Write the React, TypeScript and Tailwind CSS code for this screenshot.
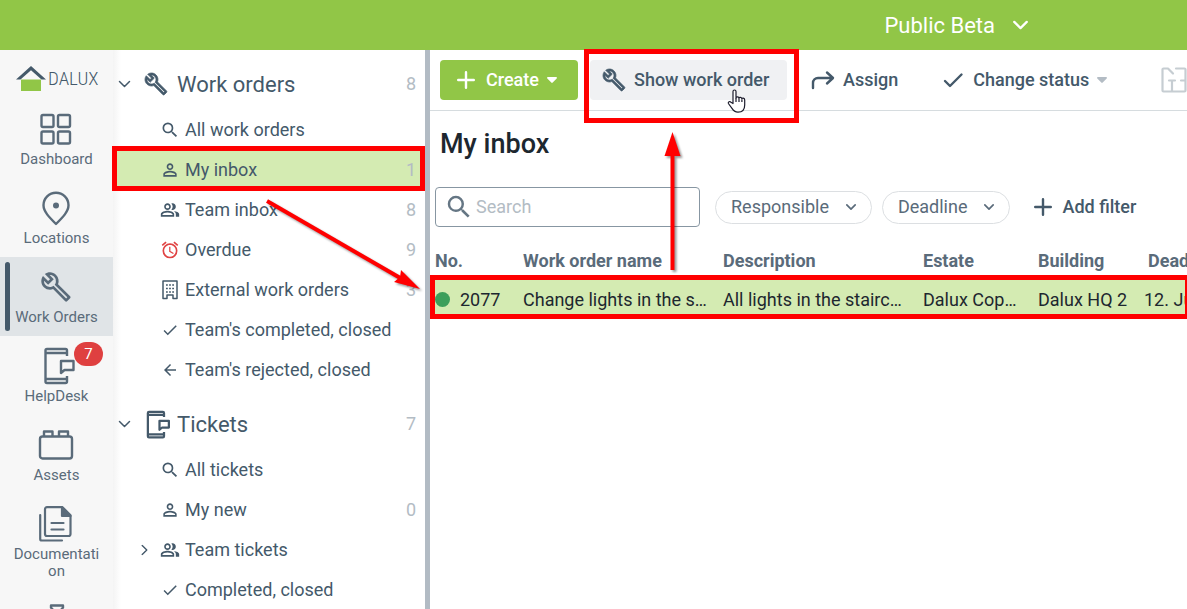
import type { ReactNode } from 'react'
import clsx from 'clsx'
import {
  MdArrowBack,
  MdCheck,
  MdOutlineAlarm,
  MdOutlineBuild,
  MdOutlinePeopleAlt,
  MdPersonOutline,
  MdSearch,
} from 'react-icons/md'

interface IconProps { className?: string }

function Chevron({ className }: IconProps) {
  return (
    <svg viewBox="0 0 12 8" className={className} fill="none" stroke="currentColor" strokeLinecap="round" strokeLinejoin="round">
      <path d="M1 1.5l5 5 5-5" />
    </svg>
  )
}

function Caret({ className }: IconProps) {
  return (
    <svg viewBox="0 0 10 6" className={className} fill="currentColor">
      <path d="M1 0h8c.9 0 1.3.9.7 1.5L5.7 5.6a1 1 0 0 1-1.4 0L.3 1.5C-.3.9.1 0 1 0z" />
    </svg>
  )
}

function Plus({ className }: IconProps) {
  return (
    <svg viewBox="0 0 18 18" className={className} fill="none" stroke="currentColor" strokeWidth="2.4" strokeLinecap="round">
      <path d="M9 1.2v15.600M1.2 9h15.600" />
    </svg>
  )
}

// Heavier cut of the wrench, for the small sizes
function BoldWrench() {
  return (
    <svg viewBox="0 0 24 24" className="size-6" fill="currentColor" stroke="currentColor" strokeWidth="0.7" strokeLinejoin="round">
      <path d="M22.610 19l-9.080-9.080c.93-2.340.45-5.100-1.440-7C9.790.61 6.210.4 3.660 2.260L7.500 6.110 6.080 7.520 2.250 3.690C.39 6.230.6 9.820 2.900 12.110c1.860 1.860 4.570 2.350 6.890 1.480l9.110 9.110c.39.39 1.020.39 1.410 0l2.300-2.300c.4-.38.4-1.010 0-1.400zm-3 1.590l-9.460-9.460c-.61.45-1.290.72-2 .82-1.360.2-2.790-.21-3.830-1.250C3.370 9.760 2.930 8.500 3 7.260l3.090 3.090 4.240-4.240-3.090-3.090c1.240-.07 2.490.37 3.440 1.310 1.080 1.080 1.490 2.570 1.240 3.960-.12.71-.42 1.370-.88 1.960l9.450 9.450-.88.89z" />
    </svg>
  )
}

function BoldCheck() {
  return (
    <svg viewBox="0 0 24 24" className="size-6" fill="none" stroke="currentColor" strokeWidth="2.4" strokeLinecap="round" strokeLinejoin="round">
      <path d="M4 13l5 5L20.500 6.500" />
    </svg>
  )
}

function DashboardIcon() {
  return (
    <svg viewBox="0 0 36 36" className="size-9" fill="none" stroke="currentColor" strokeWidth="2.4">
      <rect x="3.500" y="4" width="12" height="12" rx="1.5" />
      <rect x="20" y="4" width="12" height="12" rx="1.5" />
      <rect x="3.500" y="20.500" width="12" height="12" rx="1.5" />
      <rect x="20" y="20.500" width="12" height="12" rx="1.5" />
    </svg>
  )
}

function PinIcon() {
  return (
    <svg viewBox="0 0 36 36" className="size-9" fill="none" stroke="currentColor" strokeWidth="2.4" strokeLinejoin="round">
      <path d="M18 34C11 27 5.500 21.500 5.500 15.300a12.500 12.500 0 0 1 25 0C30.500 21.500 25 27 18 34z" />
      <circle cx="18" cy="15.500" r="3" fill="currentColor" stroke="none" />
    </svg>
  )
}

function HelpDeskIcon({ className }: IconProps) {
  return (
    <svg viewBox="0 0 32 38" className={className} fill="none" stroke="currentColor" strokeLinejoin="round">
      <path d="M24 9V3.500A1.500 1.500 0 0 0 22.500 2H4a1.500 1.500 0 0 0-1.500 1.500v31A1.500 1.500 0 0 0 4 36h18.500a1.500 1.500 0 0 0 1.500-1.500V29" />
      <path d="M2.500 6h21.500M2.500 32h21.500" />
      <path d="M18 26V14h12.500v9H21.500z" />
    </svg>
  )
}

function AssetsIcon() {
  return (
    <svg viewBox="0 0 36 36" className="size-9" fill="none" stroke="currentColor" strokeWidth="2.4" strokeLinejoin="round">
      <rect x="2" y="9.500" width="32" height="22" rx="2.500" />
      <path d="M6 9V4.500h8.500V9M21 9V4.500h9V9" />
    </svg>
  )
}

function DocumentsIcon() {
  return (
    <svg viewBox="0 0 36 36" className="size-9" fill="none" stroke="currentColor" strokeWidth="2.2" strokeLinejoin="round" strokeLinecap="round">
      <path d="M24.500 1.200H9a2 2 0 0 0-2 2V28a2 2 0 0 0 2 2h21.500a2 2 0 0 0 2-2V9.200z" />
      <path d="M24 1.500V10h8.500z" fill="currentColor" />
      <path d="M13.500 17h12M13.500 23.500h12M2.200 9v24a1.500 1.500 0 0 0 1.500 1.500H24" />
    </svg>
  )
}

function PlugIcon() {
  return (
    <svg viewBox="0 0 36 36" className="size-9" fill="none" stroke="currentColor" strokeWidth="2.4" strokeLinejoin="round">
      <path d="M12 5.500V3.500h12v2L22 8v4h-8V8z" />
    </svg>
  )
}

function BuildingIcon({ className }: IconProps) {
  return (
    <svg viewBox="0 0 16 20" className={className} fill="none" stroke="currentColor" strokeWidth="1.500" strokeLinejoin="round">
      <path d="M1 1h14v17.500h-4V15H5v3.500H1z" />
      <path d="M4 5h8M4 8.500h8M4 12h8" strokeDasharray="1.800 1.300" strokeWidth="1.600" />
    </svg>
  )
}

function AssignIcon() {
  return (
    <svg viewBox="0 0 24 20" className="h-5 w-6" fill="none" stroke="currentColor" strokeWidth="2.4" strokeLinecap="round" strokeLinejoin="round">
      <path d="M2 18v-5a5 5 0 0 1 5-5h14.500M16 2.500L22 8l-6 5.500" />
    </svg>
  )
}

function FloorPlanIcon() {
  return (
    <svg viewBox="0 0 26 26" className="size-[26px]" fill="none" stroke="currentColor" strokeWidth="2.2" strokeLinecap="round" strokeLinejoin="round">
      <path d="M12 6.500L7 1.500H2.500a1 1 0 0 0-1 1v21a1 1 0 0 0 1 1h21a1 1 0 0 0 1-1v-21a1 1 0 0 0-1-1H15M8 13.500h6M11 13.500v11M20 13.500h4" />
    </svg>
  )
}

function Logo() {
  return (
    <a href="#home" className="flex h-[49px] items-center gap-0.5 pl-4 pt-2 text-[#44596a]">
      <svg viewBox="0 0 30 26" className="h-[26px] w-[30px]">
        <path d="M5 13.500h20V25H5z" fill="#91c647" />
        <path d="M15 0l15 13.500h-4.500L15 4.200 4.500 13.500H0z" fill="currentColor" />
      </svg>
      <span className="font-['Roboto_Condensed','Liberation_Sans_Narrow','Roboto',sans-serif] text-[19px] font-light leading-6">DALUX</span>
    </a>
  )
}

interface NavItem { label: string; icon: ReactNode; active?: boolean; badge?: number }

const NAV: NavItem[] = [
  { label: 'Dashboard', icon: <DashboardIcon /> },
  { label: 'Locations', icon: <PinIcon /> },
  { label: 'Work Orders', icon: <MdOutlineBuild className="size-8" />, active: true },
  { label: 'HelpDesk', icon: <HelpDeskIcon className="ml-1.5 h-[38px] w-8 stroke-[2.4]" />, badge: 7 },
  { label: 'Assets', icon: <AssetsIcon /> },
  { label: 'Documentation', icon: <DocumentsIcon /> },
]

function SideNav() {
  return (
    <nav className="w-[113px] shrink-0 bg-[#f7f7f7] text-[#5a6b7a]">
      <Logo />
      {NAV.map(({ label, icon, active, badge }) => (
        <a
          key={label}
          href="#nav"
          className={clsx('relative flex flex-col items-center gap-1 px-3 pb-[10px] pt-3', active && 'bg-[#e0e4e7]')}
        >
          {active && <span className="absolute inset-y-[5px] left-[5px] w-[5px] rounded-full bg-[#44596a]" />}
          <span className="flex h-9 items-center pr-px">{icon}</span>
          <span className="w-full break-all text-center text-[15px] leading-[17px]">{label}</span>
          {badge && (
            <span className="absolute left-[74px] top-[6px] flex h-6 w-[29px] items-center justify-center rounded-full bg-[#df4040] text-[15px] text-white">
              {badge}
            </span>
          )}
        </a>
      ))}
      <a href="#more" aria-label="More" className="flex justify-center pt-3">
        <PlugIcon />
      </a>
    </nav>
  )
}

interface TreeItem { label: string; icon: ReactNode; count?: number; selected?: boolean; expandable?: boolean }

const WORK_ORDERS: TreeItem[] = [
  { label: 'All work orders', icon: <MdSearch className="size-5" /> },
  { label: 'My inbox', icon: <MdPersonOutline className="size-5" />, count: 1, selected: true },
  { label: 'Team inbox', icon: <MdOutlinePeopleAlt className="size-5" />, count: 8 },
  { label: 'Overdue', icon: <MdOutlineAlarm className="size-5 text-[#e04343]" />, count: 9 },
  { label: 'External work orders', icon: <BuildingIcon className="h-5 w-4" />, count: 3 },
  { label: "Team's completed, closed", icon: <MdCheck className="size-[18px]" /> },
  { label: "Team's rejected, closed", icon: <MdArrowBack className="size-[18px]" /> },
]

const TICKETS: TreeItem[] = [
  { label: 'All tickets', icon: <MdSearch className="size-5" /> },
  { label: 'My new', icon: <MdPersonOutline className="size-5" />, count: 0 },
  { label: 'Team tickets', icon: <MdOutlinePeopleAlt className="size-5" />, expandable: true },
  { label: 'Completed, closed', icon: <MdCheck className="size-[18px]" /> },
]

function TreeSection({ title, icon, count, items }: { title: string; icon: ReactNode; count: number; items: TreeItem[] }) {
  return (
    <section>
      <button type="button" className="flex h-[60px] w-full items-center pl-[5px] pr-[9px] pt-2 text-left">
        <Chevron className="h-2 w-[13px] stroke-[1.5]" />
        <span className="ml-2 flex w-[34px] justify-center">{icon}</span>
        <span className="ml-1 flex-1 text-[22px]">{title}</span>
        <span className="text-lg text-[#b3bcc4]">{count}</span>
      </button>
      <ul>
        {items.map((item) => (
          <li key={item.label} className="relative">
            <a
              href="#list"
              className={clsx('flex h-10 items-center pl-[26px] pr-[9px]', item.selected && 'bg-[#d4ebb2]')}
            >
              <span className="w-5">
                {item.expandable && <Chevron className="h-2 w-[11px] -rotate-90 stroke-[1.5]" />}
              </span>
              <span className="flex w-[22px] justify-center">{item.icon}</span>
              <span className="ml-1 flex-1 text-lg">{item.label}</span>
              <span className="text-lg text-[#b3bcc4]">{item.count}</span>
            </a>
            {item.selected && (
              <span className="pointer-events-none absolute -left-px -top-1 -bottom-px right-0 z-10 border-[5px] border-[#ff0000]" />
            )}
          </li>
        ))}
      </ul>
    </section>
  )
}

function HandCursor() {
  return (
    <svg viewBox="0 0 20 24" className="pointer-events-none absolute left-[137px] top-[29px] z-20 h-6 w-5">
      <path
        d="M6 14.500V2.500c0-2 3-2 3 0V9c0-1.600 3-1.400 3 .3 0-1.400 2.900-1.200 2.900.6 0-1.200 2.800-1 2.800 1v5c0 4-2.200 7.200-6.700 7.200-3.200 0-4.600-1.300-6-3.700L1.400 14.500c-.6-1.600 1.300-2.500 2.600-1.300z"
        fill="#fff"
        stroke="#1c1c2c"
        strokeWidth="1.2"
        strokeLinejoin="round"
      />
      <path d="M9 9v4M12 9.500V13M14.900 10.500V13" stroke="#1c1c2c" strokeWidth="1.2" />
    </svg>
  )
}

function Toolbar() {
  return (
    <div className="flex h-[61px] shrink-0 items-center whitespace-nowrap border-b border-[#d6dcdf] pl-[10px] text-lg font-medium text-[#44596a]">
      <button type="button" className="flex h-10 w-[138px] shrink-0 items-center rounded bg-[#91c647] pl-[17px] text-white">
        <Plus className="size-[18px]" />
        <span className="ml-[11px]">Create</span>
        <Caret className="ml-2 h-[6px] w-[10px]" />
      </button>
      <div className="relative ml-3 shrink-0">
        <button type="button" className="flex h-10 w-[197px] items-center rounded bg-[#f0f1f3] pl-3">
          <BoldWrench />
          <span className="ml-2">Show work order</span>
        </button>
        <span className="pointer-events-none absolute -left-[6px] -right-3 -top-[11px] -bottom-[23px] z-10 border-[5px] border-[#ff0000]" />
        <HandCursor />
      </div>
      <button type="button" className="ml-6 flex h-10 shrink-0 items-center gap-2">
        <AssignIcon />
        Assign
      </button>
      <button type="button" className="ml-[43px] flex h-10 shrink-0 items-center gap-2">
        <BoldCheck />
        Change status
        <Caret className="h-[6px] w-[10px] text-[#b3bcc4]" />
      </button>
      <button type="button" aria-label="Floor plan" className="ml-[54px] flex h-10 shrink-0 items-center text-[#c6cdd2]">
        <FloorPlanIcon />
      </button>
    </div>
  )
}

function FilterPill({ label }: { label: string }) {
  return (
    <button type="button" className="flex h-[33px] shrink-0 items-center gap-[17px] rounded-full border border-[#dcdfe2] px-[15px] text-lg text-[#5a6b7a]">
      {label}
      <Chevron className="h-2 w-[10px] stroke-2" />
    </button>
  )
}

function Filters() {
  return (
    <div className="mt-[25px] flex items-center whitespace-nowrap pl-[5px]">
      <label className="flex h-10 w-[265px] shrink-0 items-center rounded border border-[#8796a2] pl-2 text-[#657684]">
        <MdSearch className="size-[30px] shrink-0" />
        <input
          type="search"
          placeholder="Search"
          aria-label="Search"
          className="ml-[2px] w-full min-w-0 bg-transparent text-lg outline-none placeholder:text-[#b3bcc4]"
        />
      </label>
      <div className="ml-[15px] flex gap-[10px]">
        <FilterPill label="Responsible" />
        <FilterPill label="Deadline" />
      </div>
      <button type="button" className="ml-6 flex items-center gap-[10px] text-lg font-medium text-[#44596a]">
        <Plus className="size-[18px]" />
        Add filter
      </button>
    </div>
  )
}

function WorkOrderTable() {
  return (
    <div className="relative mt-[15px]">
      <table className="w-[860px] table-fixed text-left text-lg">
        <colgroup>
          <col className="w-[93px]" />
          <col className="w-[200px]" />
          <col className="w-[200px]" />
          <col className="w-[115px]" />
          <col className="w-[106px]" />
          <col />
        </colgroup>
        <thead className="text-[#5a6b7a]">
          <tr className="h-[38px]">
            <th className="pl-[5px]">No.</th>
            <th>Work order name</th>
            <th>Description</th>
            <th>Estate</th>
            <th>Building</th>
            <th className="pl-1">Deadline</th>
          </tr>
        </thead>
        <tbody>
          <tr className="h-[39px] bg-[#d4ebb2] text-[#1d272f]">
            <td className="pl-[5px]">
              <span className="flex items-center gap-[10px]">
                <span className="size-[15px] rounded-full bg-[#3d9f5b]" />
                2077
              </span>
            </td>
            <td>Change lights in the s…</td>
            <td>All lights in the stairc…</td>
            <td>Dalux Cop…</td>
            <td>Dalux HQ 2</td>
            <td>12. Jul 2023</td>
          </tr>
        </tbody>
      </table>
      <span className="pointer-events-none absolute -right-[3px] bottom-0 left-0 h-[44px] border-[5px] border-[#ff0000]" />
    </div>
  )
}

// Callout arrows drawn over the whole page
function Arrows() {
  return (
    <svg width="700" height="320" className="pointer-events-none absolute left-0 top-0 z-20 drop-shadow-[2px_2px_1px_rgba(0,0,0,0.4)]">
      <path d="M267 201L402 279" stroke="#ff0000" strokeWidth="4" />
      <path d="M420 289l-19-19-1 7-6 5z" fill="#ff0000" />
      <path d="M672.500 270V150" stroke="#ff0000" strokeWidth="4" />
      <path d="M672.500 132l8 24h-16z" fill="#ff0000" />
    </svg>
  )
}

export default function App() {
  return (
    <div className="relative flex h-screen flex-col overflow-hidden bg-white font-['Roboto',sans-serif] text-[#44596a]">
      <header className="flex h-[50px] shrink-0 items-center justify-end bg-[#91c647] pr-[159px] text-white">
        <button type="button" className="flex items-center gap-[18px] text-[22px]">
          Public Beta
          <Chevron className="h-[10px] w-[15px] stroke-[1.8]" />
        </button>
      </header>
      <div className="flex min-h-0 flex-1">
        <SideNav />
        <aside className="w-[317px] shrink-0 border-r-[5px] border-[#b2bbc4] bg-linear-to-r from-[#f4f4f4] to-white to-[8px]">
          <TreeSection title="Work orders" icon={<BoldWrench />} count={8} items={WORK_ORDERS} />
          <TreeSection title="Tickets" icon={<HelpDeskIcon className="ml-1 h-[29px] w-6 stroke-3" />} count={7} items={TICKETS} />
        </aside>
        <main className="min-w-0 flex-1 overflow-x-clip">
          <Toolbar />
          <h1 className="mt-[15px] pl-[10px] text-[27px] font-medium leading-9 text-[#1d272f]">My inbox</h1>
          <Filters />
          <WorkOrderTable />
        </main>
      </div>
      <Arrows />
    </div>
  )
}
